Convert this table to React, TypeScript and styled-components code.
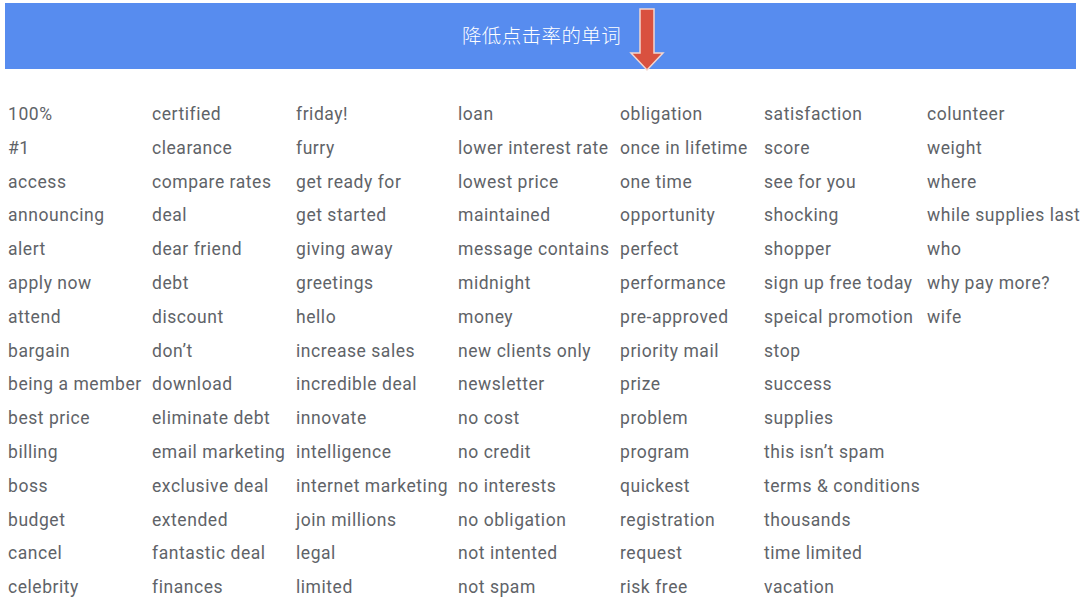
import React from 'react'
import styled, {createGlobalStyle} from 'styled-components'

const GlobalStyle = createGlobalStyle`
  body {
    margin: 0;
    background: #ffffff;
    font-family: Roboto, "Noto Sans CJK SC", sans-serif;
  }
`

const Page = styled.div`
  width: 1080px;
  height: 601px;
  overflow: hidden;
  background: #ffffff;
`

const Banner = styled.header`
  position: relative;
  margin: 3px 4px 0 5px;
  height: 66px;
  background: #578cef;
  display: flex;
  align-items: center;
  justify-content: center;
`

const Title = styled.h1`
  margin: 0 0 3px 2px;
  font-family: "Noto Sans CJK SC", sans-serif;
  font-weight: 300;
  font-size: 19.5px;
  color: #ffffff;
  letter-spacing: 0.4px;
`

const Arrow = styled.svg`
  position: absolute;
  left: 621px;
  top: 2px;
`

const Table = styled.div`
  display: flex;
  padding: 29px 0 0 8px;
`

const Column = styled.ul<{$width: number}>`
  list-style: none;
  margin: 0;
  padding: 0;
  width: ${p => p.$width}px;
  flex-shrink: 0;
`

const Word = styled.li`
  font-family: Roboto, sans-serif;
  font-size: 17.5px;
  letter-spacing: 0.55px;
  line-height: 33.8px;
  color: #606368;
  white-space: nowrap;
`

const columns: {width: number; words: string[]}[] = [
  {width: 144, words: ['100%', '#1', 'access', 'announcing', 'alert', 'apply now', 'attend', 'bargain', 'being a member', 'best price', 'billing', 'boss', 'budget', 'cancel', 'celebrity']},
  {width: 144, words: ['certified', 'clearance', 'compare rates', 'deal', 'dear friend', 'debt', 'discount', 'don’t', 'download', 'eliminate debt', 'email marketing', 'exclusive deal', 'extended', 'fantastic deal', 'finances']},
  {width: 162, words: ['friday!', 'furry', 'get ready for', 'get started', 'giving away', 'greetings', 'hello', 'increase sales', 'incredible deal', 'innovate', 'intelligence', 'internet marketing', 'join millions', 'legal', 'limited']},
  {width: 162, words: ['loan', 'lower interest rate', 'lowest price', 'maintained', 'message contains', 'midnight', 'money', 'new clients only', 'newsletter', 'no cost', 'no credit', 'no interests', 'no obligation', 'not intented', 'not spam']},
  {width: 144, words: ['obligation', 'once in lifetime', 'one time', 'opportunity', 'perfect', 'performance', 'pre-approved', 'priority mail', 'prize', 'problem', 'program', 'quickest', 'registration', 'request', 'risk free']},
  {width: 163, words: ['satisfaction', 'score', 'see for you', 'shocking', 'shopper', 'sign up free today', 'speical promotion', 'stop', 'success', 'supplies', 'this isn’t spam', 'terms & conditions', 'thousands', 'time limited', 'vacation']},
  {width: 153, words: ['colunteer', 'weight', 'where', 'while supplies last', 'who', 'why pay more?', 'wife']},
]

const App: React.FC = () => (
  <Page>
    <GlobalStyle />
    <Banner>
      <Title>降低点击率的单词</Title>
      <Arrow width="40" height="68" viewBox="0 0 40 68">
        <path
          d="M14 4 H28 V48 H37 L21 65 L5 48 H14 Z"
          fill="#d9513f"
          stroke="#f2d6d0"
          strokeWidth="1.5"
          strokeLinejoin="miter"
        />
      </Arrow>
    </Banner>
    <Table>
      {columns.map((col, i) => (
        <Column key={i} $width={col.width}>
          {col.words.map(w => (
            <Word key={w}>{w}</Word>
          ))}
        </Column>
      ))}
    </Table>
  </Page>
)

export default App
